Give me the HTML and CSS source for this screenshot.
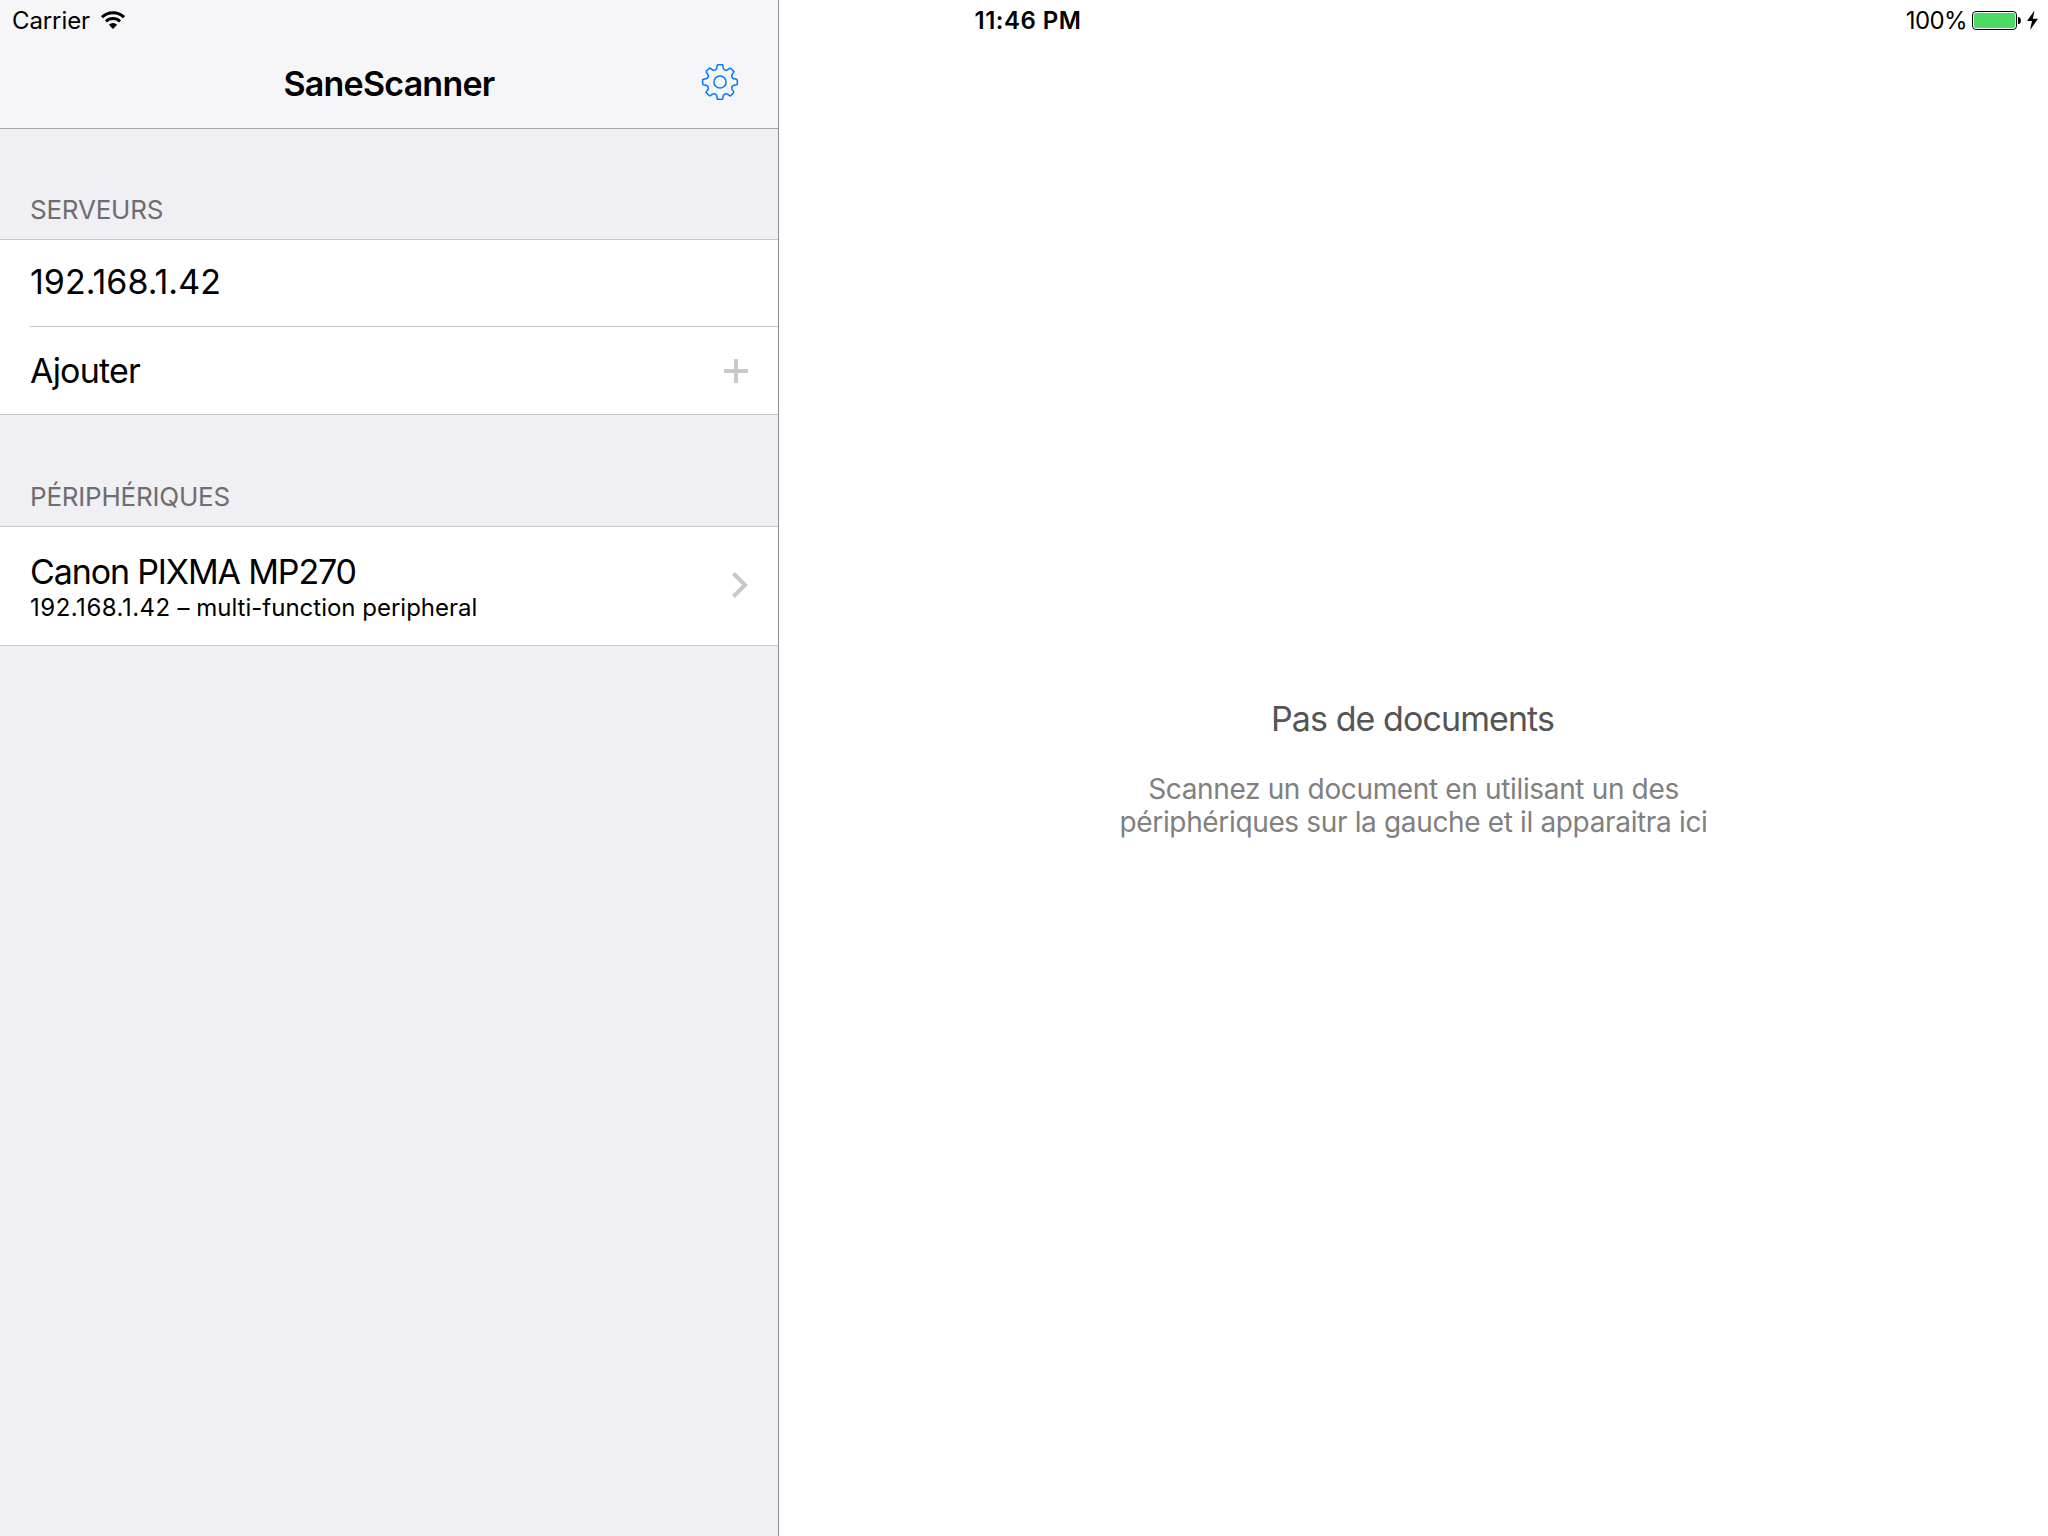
FILE: index.html
```html
<!DOCTYPE html>
<html lang="fr">
<head>
<meta charset="utf-8">
<title>SaneScanner</title>
<link rel="stylesheet" href="styles.css">
</head>
<body>
<header class="status-bar">
  <div class="status-left">
    <span class="carrier">Carrier</span>
    <svg class="wifi" width="24" height="18" viewBox="0 0 24 18">
      <path d="M1 6.2A15.6 15.6 0 0 1 23 6.2" fill="none" stroke="#000" stroke-width="3"/>
      <path d="M5 10.4A9.9 9.9 0 0 1 19 10.4" fill="none" stroke="#000" stroke-width="2.8"/>
      <path d="M12 18L7.9 13.7A5.8 5.8 0 0 1 16.1 13.7Z"/>
    </svg>
  </div>
  <span class="time">11:46 PM</span>
  <div class="status-right">
    <span class="percent">100%</span>
    <svg class="battery" width="66" height="20" viewBox="0 0 66 20">
      <rect x=".5" y="1.5" width="44" height="18" rx="3.5" fill="#fff" stroke="#000"/>
      <rect x="2" y="3" width="41" height="15" rx="2" fill="#4cd964"/>
      <path d="M46 7h1q2 1 2 3.500t-2 3.500h-1z"/>
      <path d="M62.500 .5L55 11h5l-2 9L66 8.800h-5.200z"/>
    </svg>
  </div>
</header>
<div class="split-view">
  <aside class="sidebar">
    <nav class="nav-bar">
      <h1 class="nav-title">SaneScanner</h1>
      <svg class="gear" width="38" height="38" viewBox="-19 -19 38 38" fill="none" stroke="#007aff" stroke-width="1.500" stroke-linejoin="round">
        <defs><path id="tooth" d="M-2.600-17.300H2.600L3.400-13.400Q4.600-11.200 7.070-11.880L10.390-14.070"/></defs>
        <use href="#tooth"/>
        <use href="#tooth" transform="rotate(45)"/>
        <use href="#tooth" transform="rotate(90)"/>
        <use href="#tooth" transform="rotate(135)"/>
        <use href="#tooth" transform="rotate(180)"/>
        <use href="#tooth" transform="rotate(225)"/>
        <use href="#tooth" transform="rotate(270)"/>
        <use href="#tooth" transform="rotate(315)"/>
        <circle r="6.100"/>
      </svg>
    </nav>
    <section>
      <h2 class="section-title first"><span>SERVEURS</span></h2>
      <div class="group">
        <div class="row server"><span class="address">192.168.1.42</span></div>
        <div class="row add">
          <span class="add-label">Ajouter</span>
          <svg width="24" height="24" viewBox="0 0 24 24"><path d="M10 0h4v10h10v4H14v10h-4V14H0v-4h10z" fill="#c7c7cc"/></svg>
        </div>
      </div>
    </section>
    <section>
      <h2 class="section-title"><span>PÉRIPHÉRIQUES</span></h2>
      <div class="group">
        <div class="row device">
          <div class="device-text">
            <span class="device-name">Canon PIXMA MP270</span>
            <span class="device-info"><span class="device-host">192.168.1.42</span> – multi-function peripheral</span>
          </div>
          <svg class="chevron" width="16" height="26" viewBox="0 0 16 26"><path d="M1.500 1.500L13 13L1.500 24.500" fill="none" stroke="#c7c7cc" stroke-width="4"/></svg>
        </div>
      </div>
    </section>
  </aside>
  <main class="detail">
    <h2 class="empty-title"><span>Pas de documents</span></h2>
    <p class="empty-text"><span>Scannez un document en utilisant un des</span><br><span>périphériques sur la gauche et il apparaitra ici</span></p>
  </main>
</div>
</body>
</html>
```
FILE: styles.css
```css
* { box-sizing: border-box; }

body {
  margin: 0;
  background: #fff;
  color: #000;
  font-family: Inter, "Liberation Sans", sans-serif;
  font-size: 34px;
}

h1, h2, p { margin: 0; font-weight: 400; }
svg { display: block; flex: none; }
span { white-space: nowrap; }

/* Status bar floats above both panes */
.status-bar {
  position: absolute;
  inset: 0 0 auto;
  height: 40px;
  display: grid;
  grid-template-columns: 1fr auto 1fr;
  align-items: center;
  padding: 0 10px 0 12px;
  font-size: 24px;
  line-height: 40px;
}
.status-bar span { padding-top: 2px; line-height: 38px; }
.status-left { display: flex; align-items: center; }
.carrier { width: 89px; letter-spacing: -0.1px; }
.status-bar .time { font-weight: 600; padding-left: 6px; letter-spacing: 0.5px; }
.status-right { display: flex; align-items: center; justify-content: flex-end; gap: 5px; }
.percent { letter-spacing: -0.6px; }

.split-view { display: flex; height: 1536px; }
.sidebar {
  width: 779px;
  flex: none;
  background: #efeff4;
  border-right: 1px solid #8e8e93;
}

.nav-bar {
  height: 129px;
  padding: 40px 39px 0;
  display: grid;
  grid-template-columns: 38px 1fr 38px;
  align-items: center;
  background: #f6f6f8;
  border-bottom: 1px solid #a7a7aa;
}
.nav-title {
  grid-column: 2;
  text-align: center;
  font-size: 34px;
  font-weight: 600;
  line-height: 40px;
  letter-spacing: -0.78px;
}
.gear { position: relative; top: -2px; }

.section-title {
  height: 111px;
  padding: 0 30px 13px;
  display: flex;
  align-items: flex-end;
  color: #6d6d72;
  font-size: 26px;
  line-height: 32px;
  letter-spacing: -0.22px;
}
.section-title.first { height: 110px; }

.group {
  background: #fff;
  border-top: 1px solid #c8c7cc;
  border-bottom: 1px solid #c8c7cc;
}
.row {
  display: flex;
  align-items: center;
  justify-content: space-between;
  padding-right: 30px;
  margin-left: 30px;
  letter-spacing: -0.8px;
}
.server { height: 87px; padding-bottom: 3px; border-bottom: 1px solid #c8c7cc; }
.address { letter-spacing: 0; }
.add { height: 87px; }
.add-label { padding-bottom: 1px; }
.device { height: 118px; }
.device-text { display: flex; flex-direction: column; gap: 2px; padding-top: 2px; }
.device-name { line-height: 40px; letter-spacing: -1.13px; }
.device-info { font-size: 24px; line-height: 28px; letter-spacing: 0; }
.device-host { letter-spacing: 0.5px; }
.chevron { margin-bottom: 2px; }

.detail {
  flex: 1;
  display: flex;
  flex-direction: column;
  align-items: center;
  justify-content: center;
  gap: 34px;
  padding-top: 2px;
  text-align: center;
}
.empty-title { padding-right: 2px; color: #555; font-size: 34px; line-height: 40px; letter-spacing: -0.92px; }
.empty-text { color: #808080; font-size: 28px; line-height: 33px; letter-spacing: -0.35px; }
```
